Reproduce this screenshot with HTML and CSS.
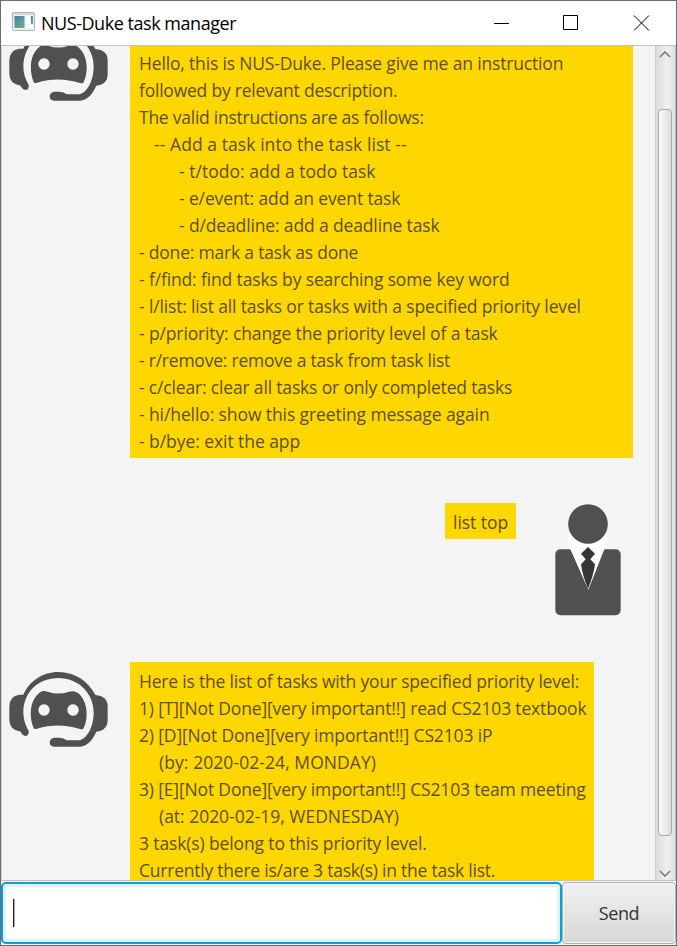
FILE: index.html
```html
<!DOCTYPE html>
<html lang="en">
<head>
<meta charset="utf-8">
<title>NUS-Duke task manager</title>
<link rel="stylesheet" href="styles.css">
</head>
<body>
<svg class="defs" aria-hidden="true">
  <symbol id="bot" viewBox="24 63 303 228">
    <path d="M70 134 H58 Q28 138 28 170 V210 Q28 240 62 245 Q68 258 78 258 Q88 254 86 243 Q70 215 70 188 C70 125 116 84 175 84 C235 84 281 130 281 188 C281 232 260 266 238 271 H200 Q192 263 178 263 H163 Q150 265 149 277 Q150 290 162 290 H240 C263 288 279 268 289 245 Q323 241 323 210 V168 Q322 138 286 135 C265 94 225 66 175 66 C129 66 88 93 70 134Z" fill="#505050"/>
    <path fill-rule="evenodd" d="M126 124 Q133 122 143 125 Q175 136 207 125 Q218 122 227 125 C252 137 264 173 259 206 Q257 223 250 236 Q247 239 240 237 C197 223 153 223 111 236 Q103 239 101 234 C86 198 89 143 126 124Z M132 163 a17 17 0 1 0 .1 0Z M219 163 a17 17 0 1 0 .1 0Z" fill="#505050"/>
  </symbol>
</svg>
<div class="window">
  <header class="titlebar">
    <svg class="app-icon" width="24" height="20" viewBox="0 0 24 20">
      <defs><linearGradient id="g" x2="1" y2="1"><stop offset="0" stop-color="#4779ad"/><stop offset="1" stop-color="#67b98a"/></linearGradient></defs>
      <rect x=".5" y=".5" width="22" height="18" rx="1" fill="#f1f1f1" stroke="#aeb2b5"/>
      <path d="M1 2H22" stroke="#d6dadd" stroke-width="2"/>
      <rect x="2.5" y="4" width="10" height="12" fill="url(#g)"/>
      <rect x="14" y="4" width="4" height="8" fill="#fff"/><rect x="19" y="4" width="2" height="8" fill="url(#g)"/>
      <rect x="14" y="13" width="7" height="3" fill="#fff"/>
    </svg>
    <h1 class="title">NUS-Duke task manager</h1>
    <svg class="controls" width="157" height="16" viewBox="0 0 157 16" fill="none" stroke="#000">
      <path d="M0 8.5H15M69.500.5H83.500V14.500H69.500Z"/><path d="M140 1L155 16M155 1L140 16" transform="translate(0 -.5)"/>
    </svg>
  </header>
  <main class="chat">
    <div class="messages">
      <section class="row row-intro">
        <svg class="bot"><use href="#bot"/></svg>
        <div class="bubble">
          <p class="a1">Hello, this is NUS-Duke. Please give me an instruction</p>
          <p class="a2">followed by relevant description.</p>
          <p class="a3">The valid instructions are as follows:</p>
          <p class="a4 in1">-- Add a task into the task list --</p>
          <p class="a5 in2">- t/todo: add a todo task</p>
          <p class="a6 in2">- e/event: add an event task</p>
          <p class="a7 in2">- d/deadline: add a deadline task</p>
          <p class="a8">- done: mark a task as done</p>
          <p class="a9">- f/find: find tasks by searching some key word</p>
          <p class="a10">- l/list: list all tasks or tasks with a specified priority level</p>
          <p class="a11">- p/priority: change the priority level of a task</p>
          <p class="a12">- r/remove: remove a task from task list</p>
          <p class="a13">- c/clear: clear all tasks or only completed tasks</p>
          <p class="a14">- hi/hello: show this greeting message again</p>
          <p class="a15">- b/bye: exit the app</p>
        </div>
      </section>
      <section class="row row-user">
        <div class="bubble"><p class="u1">list top</p></div>
        <svg class="user" width="67" height="113" viewBox="0 0 201 339">
          <path d="M43 96L41 117L50 140H151L160 117L157 96Z" fill="#fff"/>
          <rect x="4" y="139" width="196" height="198" rx="15" fill="#505050"/>
          <path d="M43 110L49 139L103 260L151 139L158 110Z" fill="#fff"/>
          <circle cx="102" cy="63" r="59.500" fill="#505050"/>
          <path d="M102 132L123 152L109 169L123 184Q118 220 102 257Q86 220 81 184L95 169L81 152Z" fill="#353535"/>
        </svg>
      </section>
      <section class="row row-list">
        <svg class="bot"><use href="#bot"/></svg>
        <div class="bubble">
          <p class="b1">Here is the list of tasks with your specified priority level:</p>
          <p class="b2">1) [T][Not Done][very important!!] read CS2103 textbook</p>
          <p class="b3">2) [D][Not Done][very important!!] CS2103 iP</p>
          <p class="b4 in3">(by: 2020-02-24, MONDAY)</p>
          <p class="b5">3) [E][Not Done][very important!!] CS2103 team meeting</p>
          <p class="b6 in3">(at: 2020-02-19, WEDNESDAY)</p>
          <p class="b7">3 task(s) belong to this priority level.</p>
          <p class="b8">Currently there is/are 3 task(s) in the task list.</p>
        </div>
      </section>
    </div>
    <div class="scrollbar">
      <svg width="12" height="7" viewBox="0 0 12 7"><path d="M1 6L6 1L11 6" fill="none" stroke="#777" stroke-width="1.500"/></svg>
      <div class="thumb"></div>
      <svg width="12" height="7" viewBox="0 0 12 7"><path d="M1 1L6 6L11 1" fill="none" stroke="#777" stroke-width="1.500"/></svg>
    </div>
  </main>
  <footer class="composer">
    <div class="field"><span class="caret"></span></div>
    <button class="send">Send</button>
  </footer>
</div>
</body>
</html>
```
FILE: styles.css
```css
* { box-sizing: border-box; }
body { margin: 0; font-family: "Open Sans", "Noto Sans", sans-serif; }
.defs { position: absolute; width: 0; height: 0; }
.window {
  width: 677px; height: 946px; border: 1px solid #6c6c6c;
  display: flex; flex-direction: column; background: #f4f4f4; overflow: hidden;
}
.titlebar {
  height: 45px; flex: none; display: flex; align-items: center;
  background: #fff; border-bottom: 1px solid #c2c2c2; padding: 0 25px 0 11px;
}
.app-icon { margin-top: -2px; }
.title { margin: 0 0 0 5px; font-size: 18px; font-weight: 400; letter-spacing: -.46px; color: #000; line-height: 24px; }
.controls { margin-left: auto; }
.chat { height: 835px; flex: none; display: flex; border-bottom: 1px solid #c2c2c2; border-left: 1px solid #d0d0d0; }
.messages { flex: 1; overflow: hidden; }
.row { display: flex; align-items: flex-start; }
.bot { width: 101px; height: 76px; flex: none; }
.bubble { background: #ffd700; color: #5d4f1c; padding: 6px 8px 0 9px; flex: none; }
.bubble p { margin: 0; font-size: 17.5px; line-height: 27px; height: 27px; letter-spacing: -.15px; white-space: nowrap; }
.row-intro { margin-top: -2px; padding-left: 6px; }
.row-intro .bot { margin-top: -19px; }
.row-intro .bubble { margin-left: 21px; width: 503px; height: 414px; }
.bubble .in1 { padding-left: 15px; }
.bubble .in2 { padding-left: 40px; }
.bubble .in3 { padding-left: 20px; }

/* Tracking per line */
.bubble .a1, .bubble .a13 { letter-spacing: -.167px; }
.bubble .a2, .bubble .a12 { letter-spacing: -.224px; }
.bubble .a3 { letter-spacing: -.25px; }
.bubble .a4, .bubble .b4 { letter-spacing: .07px; }
.bubble .a5 { letter-spacing: .02px; }
.bubble .a6, .bubble .a11, .bubble .b7 { letter-spacing: -.13px; }
.bubble .a7, .bubble .a9 { letter-spacing: -.14px; }
.bubble .a8, .bubble .b1 { letter-spacing: -.2px; }
.bubble .a14 { letter-spacing: -.1px; }
.bubble .a15 { letter-spacing: -.06px; }
.bubble .b2, .bubble .b5 { letter-spacing: -.16px; }
.bubble .b6 { letter-spacing: -.02px; }
.bubble .b8 { letter-spacing: -.23px; }
.bubble .u1 { letter-spacing: -.02px; }

.row-user { justify-content: flex-end; margin-top: 45px; padding-right: 34px; height: 159px; }
.row-user .bubble { width: 71px; height: 36px; margin-right: 38px; padding-left: 8px; }
.row-list { padding-left: 6px; }
.row-list .bot { margin-top: 9px; }
.row-list .bubble { margin-left: 21px; width: 464px; height: 230px; }
.scrollbar {
  width: 21px; flex: none; display: flex; flex-direction: column; align-items: center;
  background: linear-gradient(90deg, #dcdcdc, #f0f0f0 60%, #e0e0e0);
  border-left: 1px solid #cfcfcf; border-right: 1px solid #bdbdbd; padding: 5px 3px 3px 2px;
}
.scrollbar svg { flex: none; }
.thumb {
  width: 14px; height: 727px; flex: none; margin: 51px 0 auto; border: 1px solid #aaa; border-radius: 4px;
  background: linear-gradient(90deg, #fbfbfb, #dedede);
}
.composer { flex: 1; display: flex; padding: 1px 0; }
.field {
  width: 561px; border: 2px solid #0b9fd5; border-radius: 5px; background: #fff;
  box-shadow: inset 0 0 0 3px #dff1f9; padding: 15px 10px;
}
.caret { display: block; width: 1px; height: 28px; background: #222; box-shadow: 1px 0 #aaa; }
.send {
  flex: 1; border: 1px solid #b0b0b0; border-radius: 4px; padding: 0;
  background: linear-gradient(#f0f0f0, #d8d8d8); box-shadow: inset 0 0 0 1px #f5f5f5;
  font: 18px/24px "Open Sans", sans-serif; letter-spacing: -.4px; color: #333;
}
```
